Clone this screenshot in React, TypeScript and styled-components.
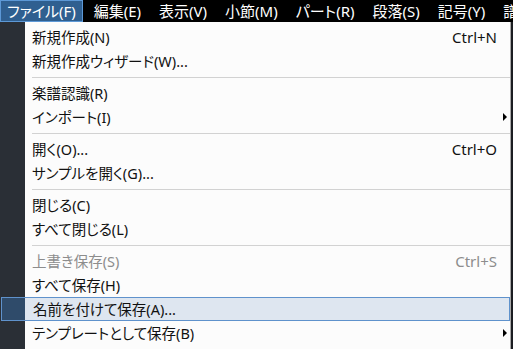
import styled, { createGlobalStyle } from 'styled-components'

const GlobalStyle = createGlobalStyle`
  html, body {
    margin: 0;
    padding: 0;
    background: #1b1d21;
    overflow: hidden;
  }
  body {
    font-family: "Noto Sans", "Noto Sans CJK JP", sans-serif;
    font-size: 15px;
    font-feature-settings: "palt";
  }
`

const Screen = styled.div`
  width: 513px;
  height: 349px;
  display: flex;
  flex-direction: column;
`

const MenuBar = styled.div`
  height: 22px;
  background: #000;
  display: flex;
  align-items: stretch;
  gap: 4px;
  white-space: nowrap;
  overflow: hidden;
`

const BarItem = styled.div<{ $open?: boolean }>`
  display: flex;
  align-items: center;
  padding: 0 6px;
  color: #fff;
  line-height: 20px;
  box-sizing: border-box;
  background: ${({ $open }) => ($open ? '#2f5f90' : 'transparent')};
  border: 1px solid ${({ $open }) => ($open ? '#5c98d6' : 'transparent')};
`

const Panel = styled.div`
  width: 510px;
  flex: 1;
  box-sizing: content-box;
  border-right: 1px solid #a9a9a9;
  padding-top: 3px;
  background: linear-gradient(to right, #2a2f36 25px, #fcfcfc 25px);
  display: flex;
  flex-direction: column;
  font-size: 14.5px;
`

const Row = styled.div<{ $active?: boolean; $disabled?: boolean }>`
  height: 24px;
  display: flex;
  align-items: center;
  padding-left: 32px;
  color: ${({ $disabled }) => ($disabled ? '#8d8d8d' : '#111')};
  line-height: 22px;
  box-sizing: border-box;
  ${({ $active }) =>
    $active &&
    `
    margin: 0 0 0 1px;
    padding-left: 31px;
    border: 1px solid #5f92cc;
    background: linear-gradient(to right, #2f4b6a 23px, #dee6f0 23px);
  `}
`

const Label = styled.span`
  flex: 1;
`

const Shortcut = styled.span`
  font-family: "Noto Sans", sans-serif;
  font-size: 15px;
`

const ArrowSlot = styled.span`
  width: 13px;
  display: flex;
  justify-content: center;
  align-items: center;
`

const Arrow = styled.span`
  width: 0;
  height: 0;
  border-top: 4px solid transparent;
  border-bottom: 4px solid transparent;
  border-left: 4px solid #000;
  margin-left: 2px;
`

const Separator = styled.div`
  height: 8px;
  display: flex;
  align-items: center;
  padding-left: 32px;

  &::after {
    content: '';
    flex: 1;
    height: 1px;
    background: #d2d2d2;
  }
`

type Item =
  | { sep: true }
  | { label: string; shortcut?: string; sub?: boolean; disabled?: boolean; active?: boolean }

const items: Item[] = [
  { label: '新規作成(N)', shortcut: 'Ctrl+N' },
  { label: '新規作成ウィザード(W)...' },
  { sep: true },
  { label: '楽譜認識(R)' },
  { label: 'インポート(I)', sub: true },
  { sep: true },
  { label: '開く(O)...', shortcut: 'Ctrl+O' },
  { label: 'サンプルを開く(G)...' },
  { sep: true },
  { label: '閉じる(C)' },
  { label: 'すべて閉じる(L)' },
  { sep: true },
  { label: '上書き保存(S)', shortcut: 'Ctrl+S', disabled: true },
  { label: 'すべて保存(H)' },
  { label: '名前を付けて保存(A)...', active: true },
  { label: 'テンプレートとして保存(B)', sub: true },
]

const bar = ['ファイル(F)', '編集(E)', '表示(V)', '小節(M)', 'パート(R)', '段落(S)', '記号(Y)', '譜面(T)']

export default function App() {
  return (
    <>
      <GlobalStyle />
      <Screen>
        <MenuBar>
          {bar.map((b, i) => (
            <BarItem key={b} $open={i === 0}>
              {b}
            </BarItem>
          ))}
        </MenuBar>
        <Panel>
          {items.map((it, i) =>
            'sep' in it ? (
              <Separator key={i} />
            ) : (
              <Row key={i} $active={it.active} $disabled={it.disabled}>
                <Label>{it.label}</Label>
                {it.shortcut && <Shortcut>{it.shortcut}</Shortcut>}
                <ArrowSlot>{it.sub && <Arrow />}</ArrowSlot>
              </Row>
            )
          )}
        </Panel>
      </Screen>
    </>
  )
}
